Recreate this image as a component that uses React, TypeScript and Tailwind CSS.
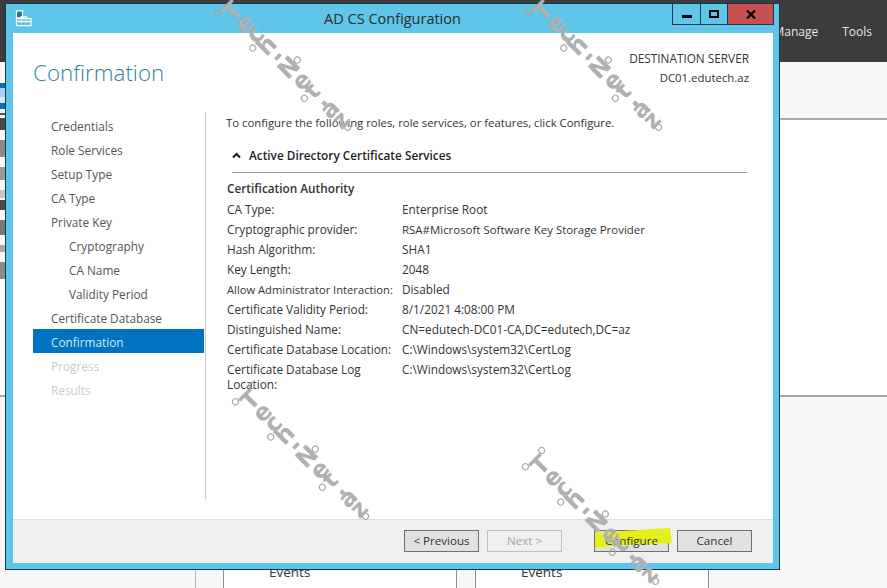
const navItems = [
  { label: "Credentials", kind: "done" },
  { label: "Role Services", kind: "done" },
  { label: "Setup Type", kind: "done" },
  { label: "CA Type", kind: "done" },
  { label: "Private Key", kind: "done" },
  { label: "Cryptography", kind: "sub" },
  { label: "CA Name", kind: "sub" },
  { label: "Validity Period", kind: "sub" },
  { label: "Certificate Database", kind: "done" },
  { label: "Confirmation", kind: "active" },
  { label: "Progress", kind: "off" },
  { label: "Results", kind: "off" },
];

const details = [
  ["CA Type:", "Enterprise Root"],
  ["Cryptographic provider:", "RSA#Microsoft Software Key Storage Provider"],
  ["Hash Algorithm:", "SHA1"],
  ["Key Length:", "2048"],
  ["Allow Administrator Interaction:", "Disabled"],
  ["Certificate Validity Period:", "8/1/2021 4:08:00 PM"],
  ["Distinguished Name:", "CN=edutech-DC01-CA,DC=edutech,DC=az"],
  ["Certificate Database Location:", "C:\\Windows\\system32\\CertLog"],
  ["Certificate Database Log Location:", "C:\\Windows\\system32\\CertLog"],
];

// bits of the window behind that stick out on the left
const leftStrip = [
  ["h-[12px]", "bg-[#3c3c3c]"],
  ["h-[21px]", "bg-[#f7f7f7]"],
  ["h-[5px]", "bg-[#0a6fb5]"],
  ["h-[9px]", "bg-[#a9d4ee]"],
  ["h-[6px]", "bg-[#d4e9f6]"],
  ["h-[6px]", "bg-[#0a6fb5]"],
  ["h-[4px]", "bg-[#f7f7f7]"],
  ["h-[2px]", "bg-[#555555]"],
  ["h-[3px]", "bg-[#f7f7f7]"],
  ["h-[12px]", "bg-[#4a4a4a]"],
  ["h-[10px]", "bg-[#f7f7f7]"],
  ["h-[17px]", "bg-[#8a8a8a]"],
  ["h-[10px]", "bg-[#f7f7f7]"],
  ["h-[13px]", "bg-[#999999]"],
  ["h-[10px]", "bg-[#f7f7f7]"],
  ["h-[8px]", "bg-[#c4c4c4]"],
  ["h-[2px]", "bg-[#f7f7f7]"],
  ["h-[10px]", "bg-[#4a4a4a]"],
  ["h-[10px]", "bg-[#f7f7f7]"],
  ["h-[15px]", "bg-[#777777]"],
  ["h-[10px]", "bg-[#f7f7f7]"],
  ["h-[7px]", "bg-[#aaaaaa]"],
  ["h-[10px]", "bg-[#f7f7f7]"],
  ["h-[17px]", "bg-[#8a8a8a]"],
];

// the watermark's letters stand across the diagonal, so each gets its own slot
const watermarkLetters = [
  ["T", "w-[18px]"],
  ["e", "w-[16px]"],
  ["c", "w-[15px]"],
  ["h", "w-[17px]"],
  ["-", "w-[13px]"],
  ["N", "w-[20px]"],
  ["e", "w-[16px]"],
  ["t", "w-[13px]"],
  [".", "w-[11px]"],
  ["a", "w-[16px]"],
  ["z", "w-[15px]"],
];

function ServerIcon() {
  return (
    <svg width="17" height="17" viewBox="0 0 17 17" fill="none" stroke="white" strokeWidth="1.2">
      <path d="M1.5 0.8h6v7h-6z" fill="#1e6fa8" stroke="white" />
      <path d="M1.5 8v7.6h14.5v-7h-14" />
      <path d="M6 8.5V6.8h5.5v1.8" />
      <path d="M1.5 11.5h14.5" />
      <path d="M6.5 10.5v2.2M11 10.5v2.2" />
    </svg>
  );
}

function Ring({ className }: { className: string }) {
  return <span className={`absolute size-[7px] rounded-full border-[1.5px] border-[#a4a4a4] ${className}`} />;
}

function Watermark({ className }: { className: string }) {
  return (
    <div
      className={`absolute flex h-[24px] -translate-x-1/2 -translate-y-1/2 rotate-45 pointer-events-none font-['DejaVu_Sans',sans-serif] text-[24px] leading-[24px] font-bold text-[#b0b0b0] ${className}`}
    >
      <Ring className="-left-[4px] -top-[3px]" />
      <Ring className="-left-[4px] -bottom-[3px]" />
      <Ring className="left-[46px] -bottom-[3px]" />
      <Ring className="left-[86px] -top-[3px]" />
      <Ring className="left-[118px] -bottom-[2px]" />
      <Ring className="-right-[6px] bottom-[8px]" />
      {watermarkLetters.map(([ch, w], i) => (
        <span key={i} className={`${w} flex justify-center -rotate-90`}>
          {ch}
        </span>
      ))}
    </div>
  );
}

function WizardButton({ label, disabled, highlight }: { label: string; disabled?: boolean; highlight?: boolean }) {
  return (
    <button
      className={`relative w-[75px] h-[22px] border text-[11.6px] leading-[20px] ${
        disabled
          ? "bg-[#f0f0f0] border-[#bfbfbf] text-[#a3a3a3]"
          : "bg-[#e1e1e1] border-[#707070] text-[#333333]"
      }`}
    >
      {highlight && (
        <svg className="absolute -left-[1px] -top-[3px]" width="80" height="22" viewBox="0 0 80 22">
          <path d="M1 5 C20 4 55 1 76 0 L78 15 C55 16 20 17 1 20 Z" fill="#e6ee1c" />
        </svg>
      )}
      <span className="relative">{label}</span>
    </button>
  );
}

export default function App() {
  return (
    <div className="relative w-[887px] h-[588px] overflow-hidden bg-[#f7f7f7] font-['Open_Sans',sans-serif] text-[#444444]">
      {/* Server Manager behind the dialog */}
      <div className="h-[62px] bg-[#3c3c3c] flex justify-end items-start pt-[24px] gap-[24px] pr-[15px] text-[12px] leading-[16px] text-[#e8e8e8]">
        <span>Manage</span>
        <span>Tools</span>
      </div>
      <div className="h-[58px] border-b-2 border-[#a8a8a8]" />
      <div className="h-[277px] bg-white border-b-2 border-[#a8a8a8]" />
      <div className="flex pl-[195px] pt-[167px] h-[191px]">
        <div className="w-[28px] border-l border-[#b5b5b5]" />
        <div className="w-[234px] bg-white border-x border-[#8f8f8f] pl-[45px] text-[13.5px] leading-[16px] text-[#333333]">
          Events
        </div>
        <div className="w-[18px]" />
        <div className="w-[234px] bg-white border-x border-[#8f8f8f] pl-[45px] text-[13.5px] leading-[16px] text-[#333333]">
          Events
        </div>
      </div>

      <div className="absolute left-0 top-[50px] w-[5px] flex flex-col">
        {leftStrip.map(([h, bg], i) => (
          <div key={i} className={`${h} ${bg}`} />
        ))}
      </div>

      {/* Dialog */}
      <div className="absolute left-[5px] top-[3px] w-[775px] h-[567px] flex flex-col border border-[#17384a] bg-[#5fc5e9] pl-[7px] pr-[6px] pb-[6px]">
        <div className="h-[29px] -ml-[7px] -mr-[6px] grid grid-cols-[1fr_auto_1fr] items-start">
          <div className="pl-[9px] pt-[6px]">
            <ServerIcon />
          </div>
          <div className="text-[14.5px] leading-[20px] pt-[5px] text-[#2b2b2b]">AD CS Configuration</div>
          <div className="flex justify-end pr-[5px]">
            <div className="flex h-[21px] border-x border-b border-[#17384a]">
              <div className="w-[28px] border-r border-[#17384a] flex items-center justify-center">
                <div className="w-[10px] h-[3px] bg-black mt-[5px]" />
              </div>
              <div className="w-[26px] flex items-center justify-center">
                <div className="w-[10px] h-[8px] border-2 border-black" />
              </div>
              <div className="w-[46px] bg-[#c75050] border-l border-[#17384a] flex items-center justify-center">
                <svg width="10" height="9" viewBox="0 0 10 9" stroke="black" strokeWidth="2.2">
                  <path d="M1 0.5l8 8M9 0.5l-8 8" />
                </svg>
              </div>
            </div>
          </div>
        </div>

        <div className="flex-1 flex flex-col bg-white">
          <div className="h-[79px] flex justify-between">
            <h1 className="pl-[20px] pt-[24px] text-[22.4px] leading-[32px] font-light text-[#2f7f9f]">Confirmation</h1>
            <div className="pr-[24px] pt-[15px] text-right text-[11.8px] leading-[20px] text-[#333333]">
              <div>DESTINATION SERVER</div>
              <div className="text-[11.4px]">DC01.edutech.az</div>
            </div>
          </div>

          <div className="h-[387px] flex">
            <nav className="w-[171px] ml-[20px] pt-[1px] text-[11.8px]">
              {navItems.map((item) => (
                <div
                  key={item.label}
                  className={`h-[24px] pt-[1px] leading-[24px] ${item.kind === "sub" ? "pl-[36px]" : "pl-[18px]"} ${
                    item.kind === "active"
                      ? "bg-[#0072c0] text-[#cdeeff]"
                      : item.kind === "off"
                        ? "text-[#cbcbcb]"
                        : "text-[#555555]"
                  }`}
                >
                  {item.label}
                </div>
              ))}
            </nav>
            <div className="w-px ml-[1px] bg-[#c8c8c8]" />
            <div className="flex-1 pl-[21px] text-[11.8px] text-[#333333]">
              <p className="-ml-[1px] h-[20px] leading-[20px] mt-[1px] text-[11.35px]">
                To configure the following roles, role services, or features, click Configure.
              </p>
              <div className="mt-[11px] ml-[5px] mr-[26px] h-[29px] border-b border-[#a0a0a0] flex items-start pt-[3px]">
                <svg className="mt-[5px]" width="9" height="7" viewBox="0 0 9 7" fill="none" stroke="#1a1a1a" strokeWidth="2">
                  <path d="M1 5.5l3.5-3.5 3.5 3.5" />
                </svg>
                <span className="ml-[8px] leading-[16px] font-semibold text-[#1f1f1f]">
                  Active Directory Certificate Services
                </span>
              </div>
              <div className="mt-[6px] h-[21px] leading-[18px] font-semibold">Certification Authority</div>
              <dl>
                {details.map(([name, value]) => (
                  <div key={name} className="flex min-h-[20px] pt-[1px]">
                    <dt
                      className={`w-[175px] shrink-0 pr-[8px] leading-[15px] pt-[1px] ${
                        name.startsWith("Allow") ? "whitespace-nowrap text-[11.2px]" : ""
                      }`}
                    >
                      {name}
                    </dt>
                    <dd className={`leading-[15px] pt-[1px] ${value.startsWith("RSA") ? "text-[11.45px]" : ""}`}>{value}</dd>
                  </div>
                ))}
              </dl>
            </div>
          </div>

          <div className="flex-1 mt-[20px] bg-[#f0f0f0] border-t border-[#dfdfdf] flex items-start justify-end pt-[10px] pr-[21px]">
            <div className="flex">
              <WizardButton label="< Previous" />
              <div className="w-[8px]" />
              <WizardButton label="Next >" disabled />
              <div className="w-[32px]" />
              <WizardButton label="Configure" highlight />
              <div className="w-[8px]" />
              <WizardButton label="Cancel" />
            </div>
          </div>
        </div>
      </div>

      <Watermark className="left-[286px] top-[65px]" />
      <Watermark className="left-[597px] top-[65px]" />
      <Watermark className="left-[304px] top-[454px]" />
      <Watermark className="left-[594px] top-[519px]" />
    </div>
  );
}
